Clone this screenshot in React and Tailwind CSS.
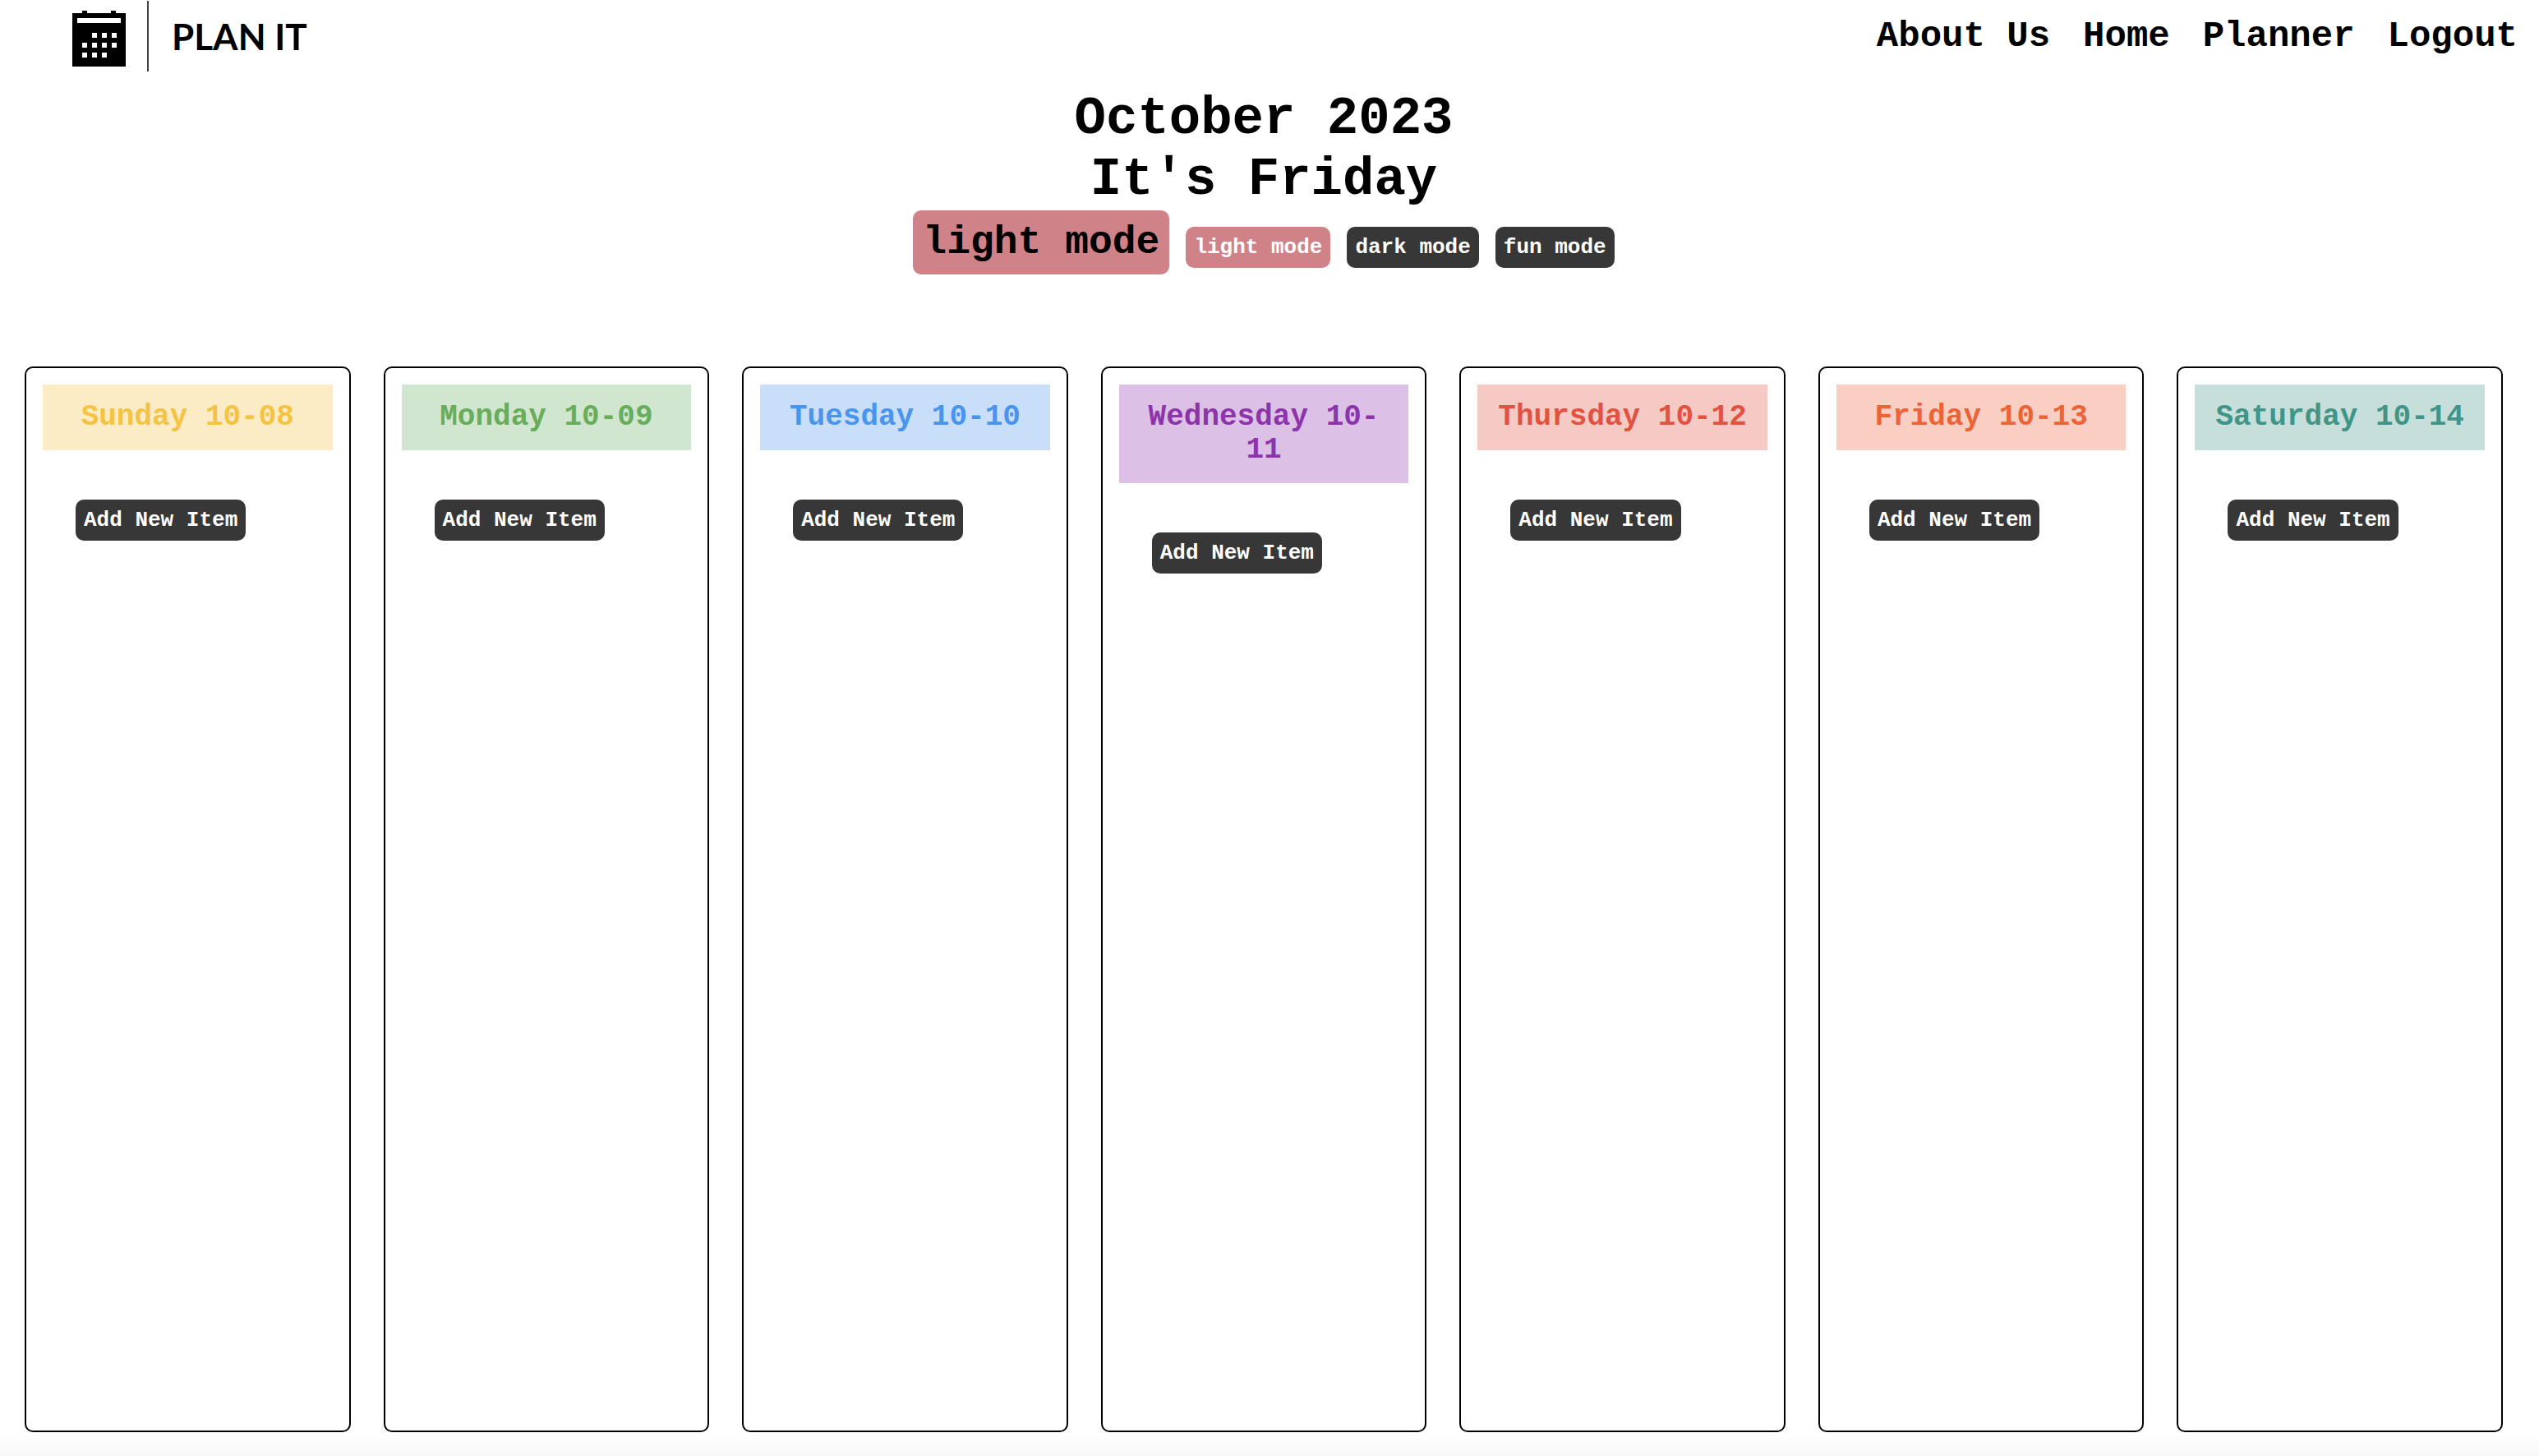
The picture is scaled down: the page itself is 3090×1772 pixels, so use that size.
const days = [
  { name: "Sunday", date: "10-08", tone: "bg-[#fcecc6] text-[#f5c344]" },
  { name: "Monday", date: "10-09", tone: "bg-[#d1e6cf] text-[#68ad5b]" },
  { name: "Tuesday", date: "10-10", tone: "bg-[#c8def9] text-[#4994ec]" },
  { name: "Wednesday", date: "10-11", tone: "bg-[#dcc0e5] text-[#8e34aa]" },
  { name: "Thursday", date: "10-12", tone: "bg-[#f6cac4] text-[#e15241]" },
  { name: "Friday", date: "10-13", tone: "bg-[#f9cfc4] text-[#ec6337]" },
  { name: "Saturday", date: "10-14", tone: "bg-[#c6dfda] text-[#419488]" },
];

const links = ["About Us", "Home", "Planner", "Logout"];

const dots = [
  [24, 27], [36, 27], [48, 27],
  [12, 39], [24, 39], [36, 39], [48, 39],
  [12, 51], [24, 51], [36, 51],
];

function CalendarIcon() {
  return (
    <svg viewBox="0 0 65 68" className="mt-[6px] h-[68px] w-[65px]" aria-hidden="true">
      <path d="M0 3h12V0h6v3h29V0h6v3h12v65H0z" fill="#000" />
      <rect x="6" y="9" width="53" height="6" fill="#fff" />
      {dots.map(([x, y]) => (
        <rect key={`${x}-${y}`} x={x} y={y} width="6" height="6" fill="#fff" />
      ))}
    </svg>
  );
}

function SmallButton({ children, tone = "bg-[#373737]" }) {
  return (
    <button
      type="button"
      className={`h-[50px] rounded-[10px] px-[10px] text-[26px] leading-[50px] font-bold whitespace-nowrap text-white ${tone}`}
    >
      {children}
    </button>
  );
}

function DayColumn({ name, date, tone }) {
  return (
    <section className="flex-1 basis-0 min-w-0 rounded-[10px] border-2 border-black p-5">
      <h2 className={`p-5 text-center text-4xl leading-10 font-bold ${tone}`}>
        {name} {date}
      </h2>
      <div className="mt-15 ml-10">
        <SmallButton>Add New Item</SmallButton>
      </div>
    </section>
  );
}

export default function App() {
  return (
    <div className="flex min-h-screen flex-col bg-white font-['Courier_New','Liberation_Mono',monospace] text-black">
      <header className="flex h-[88px] items-center justify-between pr-[26px] pl-[88px]">
        <a href="#home" className="flex items-center">
          <CalendarIcon />
          <span className="ml-[26px] h-[86px] w-[2px] bg-[#444]" />
          <span className="ml-[28px] font-['Lato',sans-serif] text-[44px] leading-[60px] font-bold">
            PLAN IT
          </span>
        </a>
        <nav className="flex gap-10 text-[44px] leading-[50px] font-bold">
          {links.map((label) => (
            <a key={label} href="#nav">
              {label}
            </a>
          ))}
        </nav>
      </header>

      <main className="flex flex-1 flex-col pr-[44px] pl-[30px]">
        <h1 className="mt-5 text-center text-[64px] leading-[74px] font-bold">
          October 2023
          <br />
          It's Friday
        </h1>
        <div className="flex items-baseline justify-center gap-5">
          <p className="rounded-[10px] bg-[#d08289] px-3 py-3 text-5xl leading-[54px] font-bold">
            light mode
          </p>
          <SmallButton tone="bg-[#d08289]">light mode</SmallButton>
          <SmallButton>dark mode</SmallButton>
          <SmallButton>fun mode</SmallButton>
        </div>
        <div className="mt-28 flex flex-1 gap-10">
          {days.map((day) => (
            <DayColumn key={day.name} {...day} />
          ))}
        </div>
      </main>
      <footer className="h-[29px] bg-linear-to-b from-white to-[#f8f8f8]" />
    </div>
  );
}
